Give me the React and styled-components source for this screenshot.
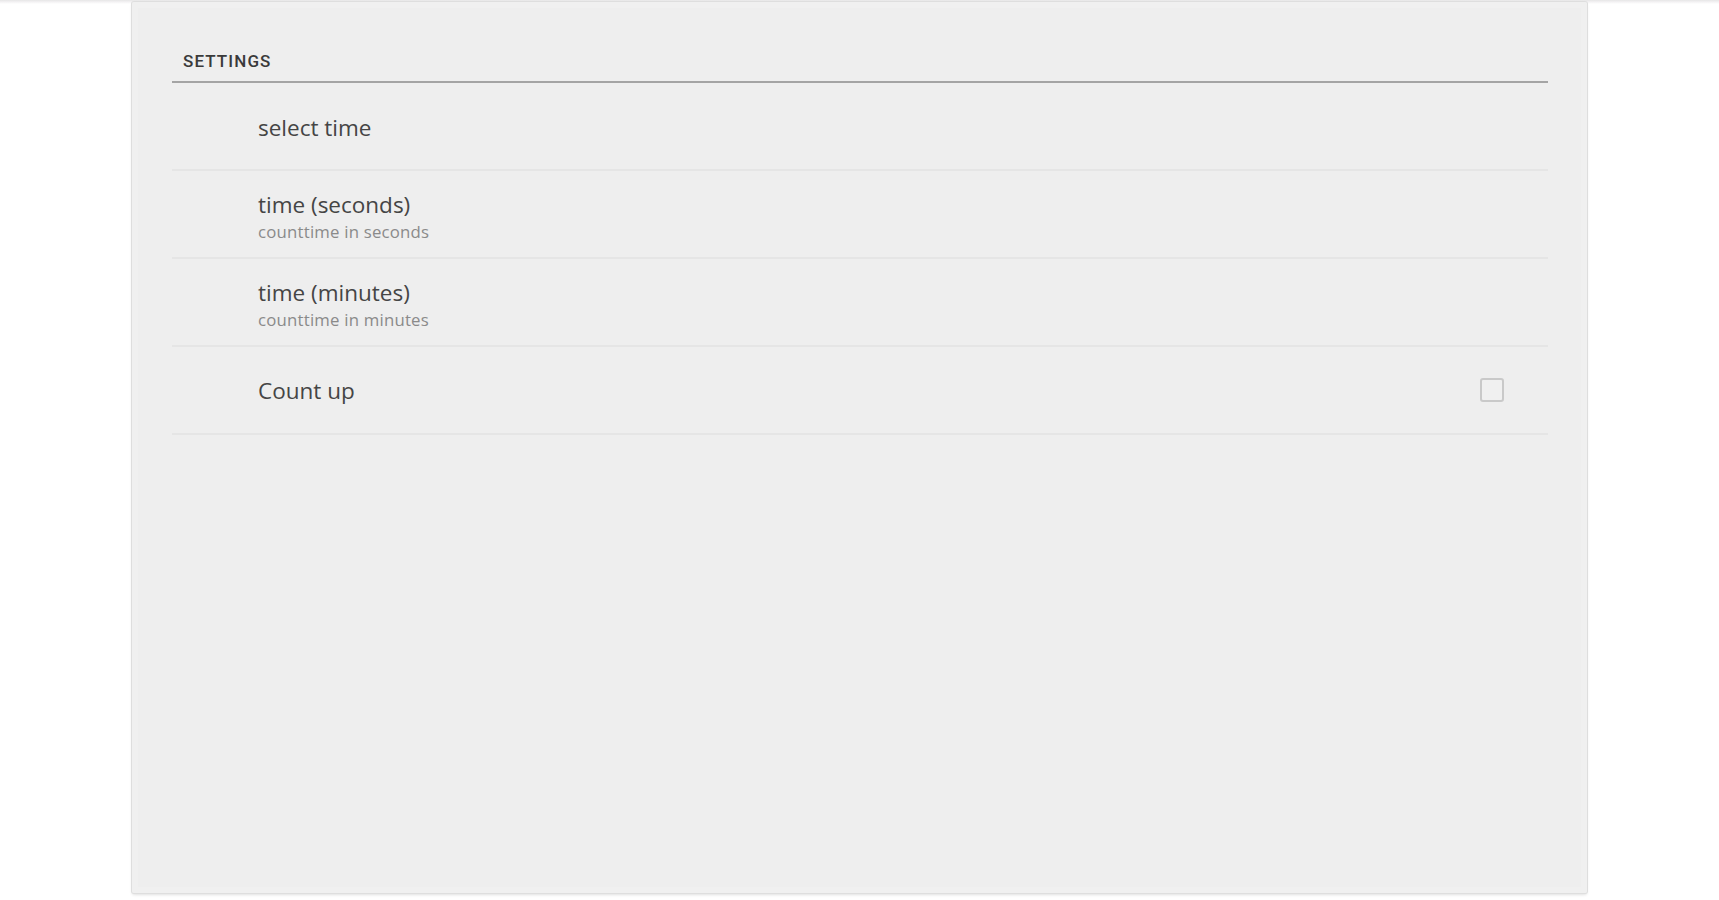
import React from "react";
import styled, { createGlobalStyle } from "styled-components";

const Global = createGlobalStyle`
  html, body { margin: 0; padding: 0; background: #ffffff; }
  body { font-family: "Open Sans", Roboto, "Liberation Sans", sans-serif; }
  * { box-sizing: border-box; }
`;

const Page = styled.div`
  width: 1719px;
  height: 900px;
  overflow: hidden;
  display: flex;
  justify-content: center;
  padding-top: 2px;
  background: linear-gradient(#e6e6e6 0, #f4f2f4 2px, #ffffff 4px);
`;

const Panel = styled.div`
  width: 1455px;
  height: 891px;
  background: #eeeeee;
  border-radius: 2px;
  box-shadow: 0 0 0 1px #dedede, 0 2px 3px rgba(0, 0, 0, 0.12), inset 0 0 0 6px #f0f0f0;
  padding: 48px 39px 0 40px;
  display: flex;
  flex-direction: column;
`;

const CategoryTitle = styled.div`
  font-family: Roboto, "Open Sans", sans-serif;
  font-size: 17px;
  font-weight: 500;
  letter-spacing: 1.1px;
  color: #3a3a3a;
  text-transform: uppercase;
  padding: 0 0 9px 11px;
  line-height: 22px;
  border-bottom: 2px solid #a4a4a4;
`;

const Row = styled.div`
  height: 88px;
  display: flex;
  align-items: center;
  padding-left: 86px;
  padding-right: 44px;
  border-bottom: 2px solid #e5e5e5;
`;

const Texts = styled.div`
  flex: 1;
  display: flex;
  flex-direction: column;
  justify-content: center;
  padding-top: ${(p) => p.$offset}px;
`;

const Title = styled.div`
  font-size: 22.5px;
  color: #454545;
  line-height: 26px;
`;

const Summary = styled.div`
  font-size: 16.8px;
  letter-spacing: 0.2px;
  color: #8a8a8a;
  line-height: 20px;
  margin-top: 4px;
`;

const Checkbox = styled.div`
  width: 24px;
  height: 24px;
  border: 2px solid #c9c9c9;
  border-radius: 3px;
  background: #f0f0f0;
`;

const items = [
  { title: "select time", offset: 4 },
  { title: "time (seconds)", summary: "counttime in seconds", offset: 6 },
  { title: "time (minutes)", summary: "counttime in minutes", offset: 6 },
  { title: "Count up", checkbox: true, offset: 2 },
];

export default function App() {
  return (
    <>
      <Global />
      <Page>
        <Panel>
          <CategoryTitle>Settings</CategoryTitle>
          {items.map((it) => (
            <Row key={it.title}>
              <Texts $offset={it.offset}>
                <Title>{it.title}</Title>
                {it.summary && <Summary>{it.summary}</Summary>}
              </Texts>
              {it.checkbox && <Checkbox />}
            </Row>
          ))}
        </Panel>
      </Page>
    </>
  );
}
